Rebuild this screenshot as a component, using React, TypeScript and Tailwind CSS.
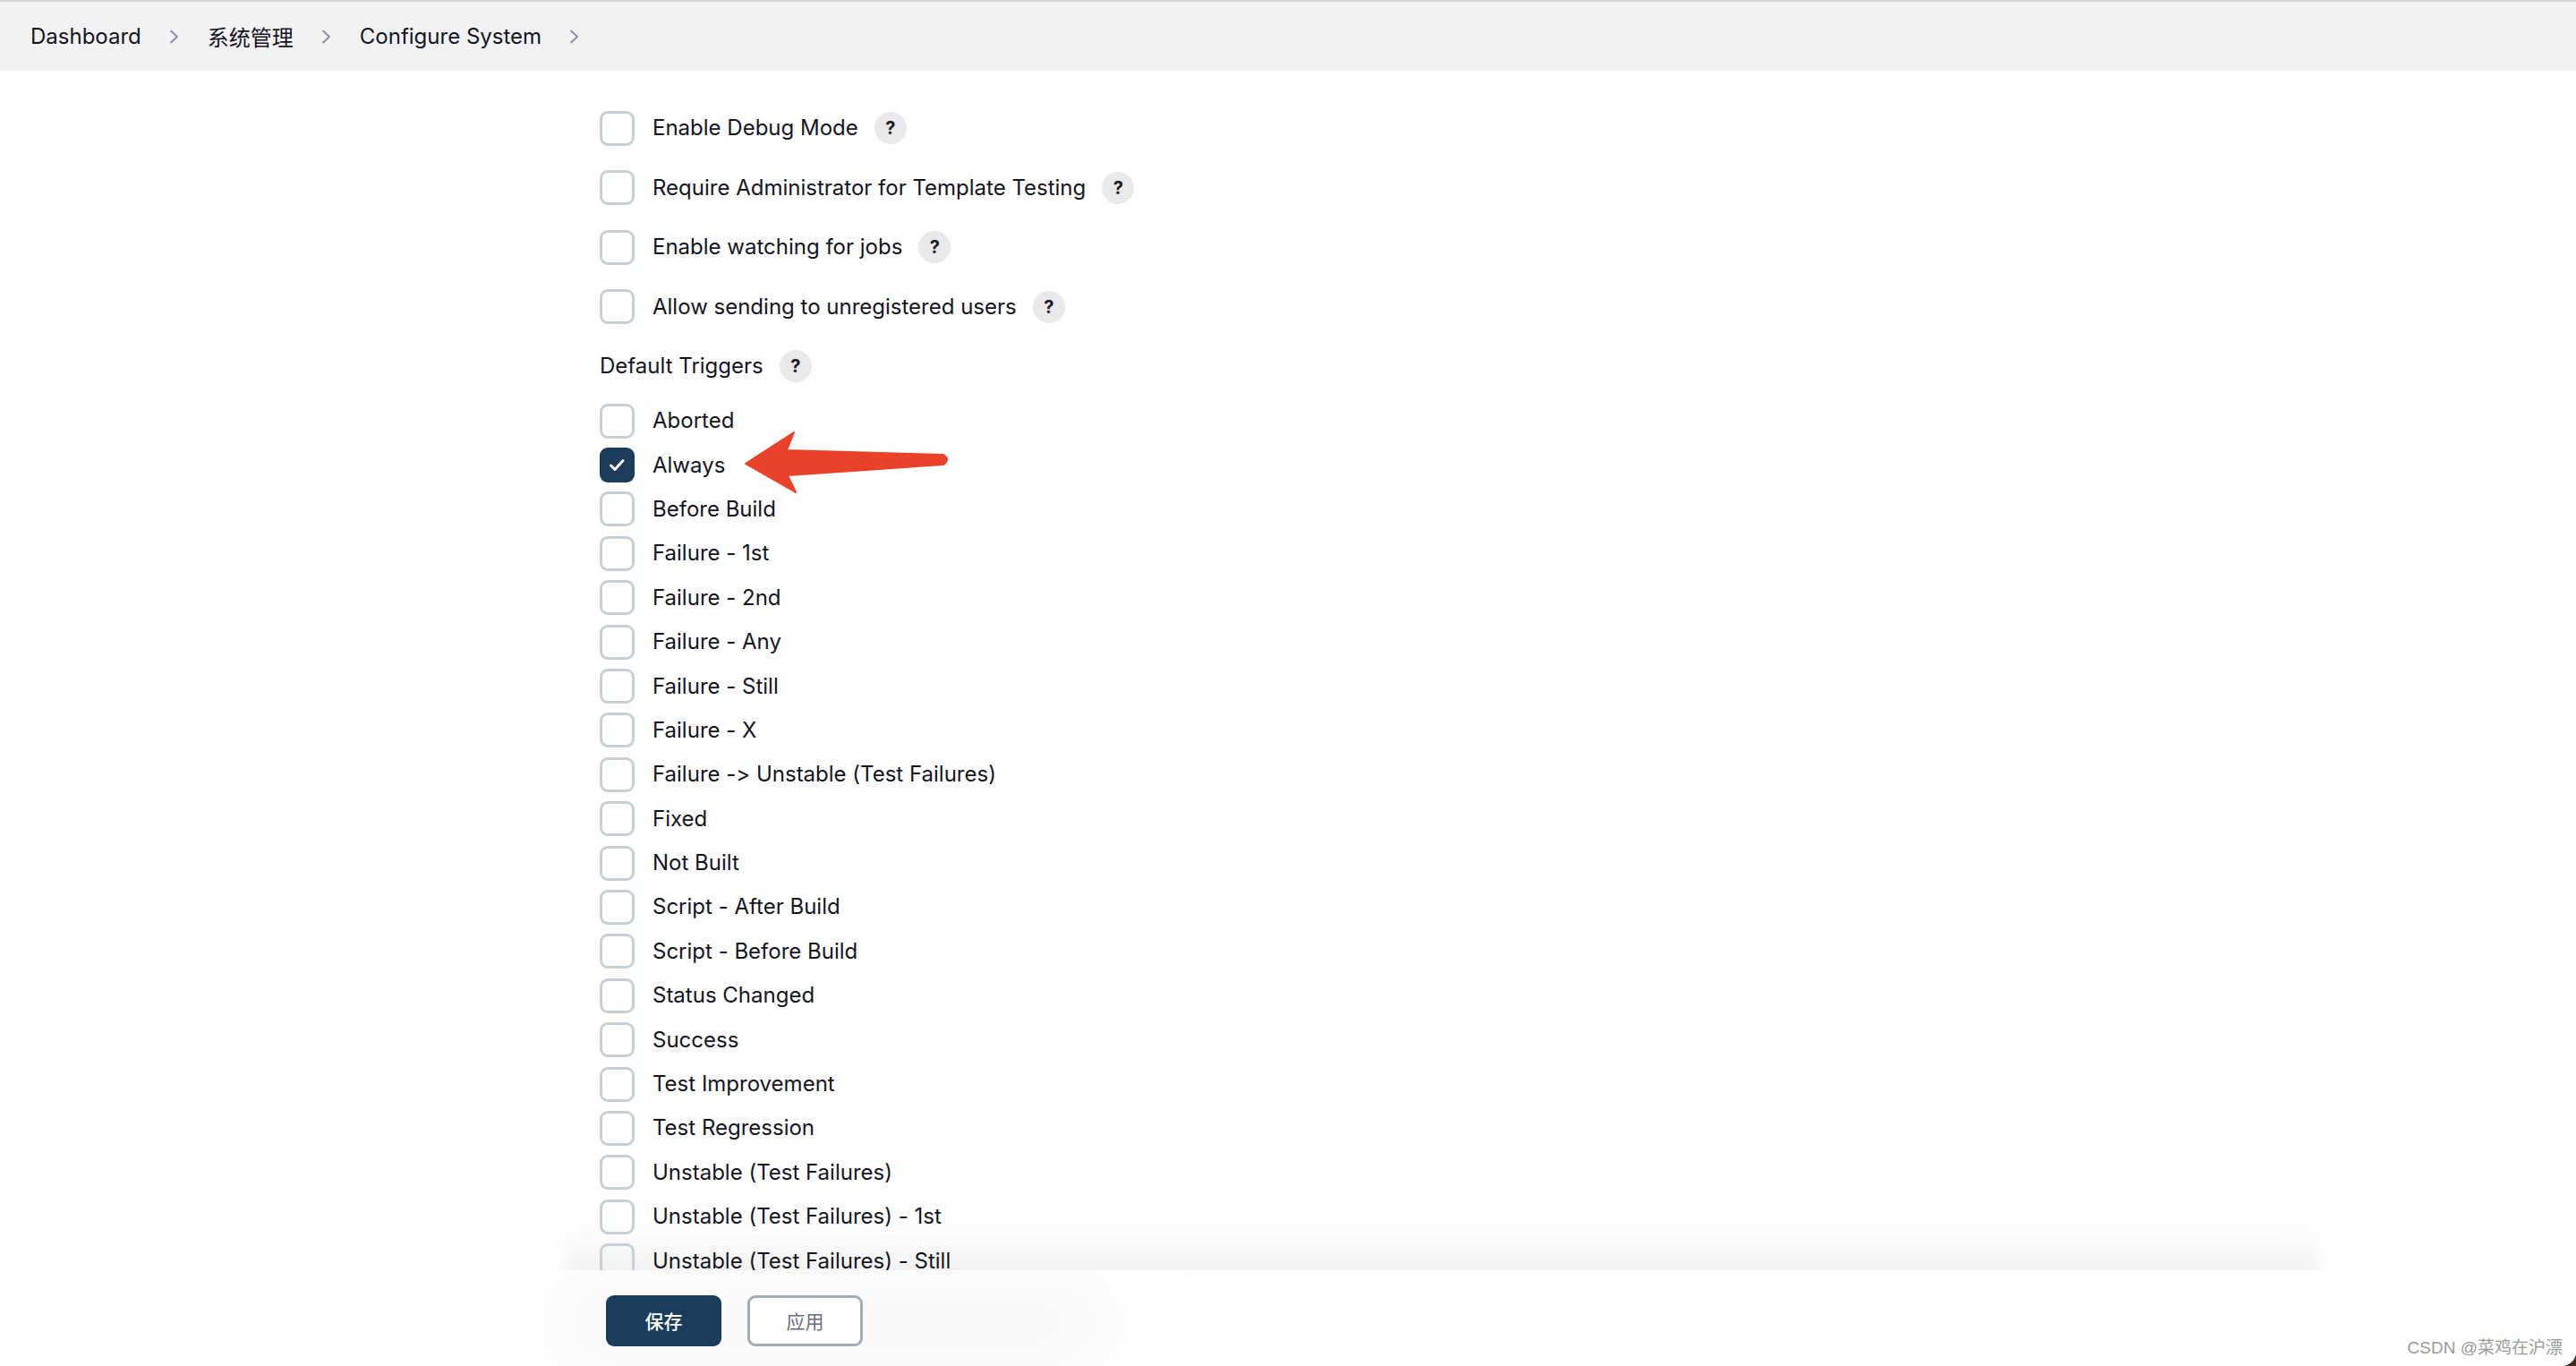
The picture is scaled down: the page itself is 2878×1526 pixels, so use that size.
import React from "react";

const triggers = [
  "Aborted",
  "Always",
  "Before Build",
  "Failure - 1st",
  "Failure - 2nd",
  "Failure - Any",
  "Failure - Still",
  "Failure - X",
  "Failure -> Unstable (Test Failures)",
  "Fixed",
  "Not Built",
  "Script - After Build",
  "Script - Before Build",
  "Status Changed",
  "Success",
  "Test Improvement",
  "Test Regression",
  "Unstable (Test Failures)",
  "Unstable (Test Failures) - 1st",
  "Unstable (Test Failures) - Still",
];

function Chevron() {
  return (
    <svg width="12" height="16" viewBox="0 0 12 16" className="shrink-0">
      <path d="M2 1.5 L9 8 L2 14.5" fill="none" stroke="#8c8c90" strokeWidth="1.8" strokeLinecap="round" strokeLinejoin="round" />
    </svg>
  );
}

function Help() {
  return (
    <span className="ml-[18px] flex h-[36px] w-[36px] shrink-0 items-center justify-center rounded-full bg-[#e9e9ec] text-[20px] font-bold text-[#1c1c24]">
      ?
    </span>
  );
}

function Box({ checked }: { checked?: boolean }) {
  if (checked) {
    return (
      <span className="flex h-[39px] w-[39px] shrink-0 items-center justify-center rounded-[9px] bg-[#1b3d5c]">
        <svg width="39" height="39" viewBox="0 0 39 39">
          <path d="M12.5 20 L17 24.5 L26 14.5" fill="none" stroke="#ffffff" strokeWidth="3" strokeLinecap="round" strokeLinejoin="round" />
        </svg>
      </span>
    );
  }
  return <span className="h-[39px] w-[39px] shrink-0 rounded-[9px] border-[3px] border-[#c8d0d5]" />;
}

export default function App() {
  return (
    <div className="relative flex h-[1526px] w-[2878px] flex-col overflow-hidden bg-[#4a2418] font-['Inter','Noto_Sans_CJK_SC',sans-serif] text-[#14141f] [font-feature-settings:'calt'_0,'liga'_0]">
      <div className="relative flex h-full w-full flex-col overflow-hidden rounded-br-[16px] bg-white">
        {/* Header / breadcrumb */}
        <header className="flex h-[79px] shrink-0 items-center gap-[31px] border-t-2 border-[#d6d6d9] bg-[#f2f2f5] pl-[34px] text-[24px]">
          <span>Dashboard</span>
          <Chevron />
          <span className="font-['Noto_Sans_CJK_SC',sans-serif] text-[24px]">系统管理</span>
          <Chevron />
          <span>Configure System</span>
          <Chevron />
        </header>

        {/* Content */}
        <main className="relative flex-1 overflow-hidden">
          <div className="absolute bottom-[-24px] left-[630px] h-[80px] w-[1960px] rounded-[30px] bg-gradient-to-b from-white to-[#ececec] blur-[10px]" />
          <div className="relative ml-[670px] flex flex-col pt-[31px] text-[24px]">
            {[
              "Enable Debug Mode",
              "Require Administrator for Template Testing",
              "Enable watching for jobs",
              "Allow sending to unregistered users",
            ].map((t) => (
              <div key={t} className="flex h-[66.5px] items-center">
                <Box />
                <span className="ml-[20px]">{t}</span>
                <Help />
              </div>
            ))}
            <div className="flex h-[66.5px] items-center">
              <span>Default Triggers</span>
              <Help />
            </div>
            <div className="mt-[3px] flex flex-col">
              {triggers.map((t) => (
                <div key={t} className="flex h-[49.4px] items-center">
                  <Box checked={t === "Always"} />
                  <span className="ml-[20px]">{t}</span>
                </div>
              ))}
            </div>
          </div>

          {/* red annotation arrow */}
          <svg className="absolute left-0 top-0" width="1100" height="600" viewBox="0 0 1100 600" style={{ pointerEvents: "none" }}>
            <path
              d="M833 439 L887 404 L879 424 L1054 429 Q1062 434 1054 440 L880 452 L889 471 Z"
              fill="#ea4229"
              stroke="#ea4229"
              strokeWidth="2"
              strokeLinejoin="round"
            />
          </svg>
        </main>

        {/* Bottom bar */}
        <footer className="relative flex h-[107px] shrink-0 items-start overflow-hidden bg-white">
          <div className="absolute left-[620px] top-[15px] h-[90px] w-[620px] rounded-full bg-[#f6f6f6] blur-2xl" />
          <div className="relative ml-[677px] mt-[28px] flex gap-[29px]">
            <button className="flex h-[57px] w-[129px] items-center justify-center rounded-[9px] bg-[#1b3d5c] font-['Noto_Sans_CJK_SC',sans-serif] text-[21px] font-medium text-white">
              保存
            </button>
            <button className="flex h-[57px] w-[129px] items-center justify-center rounded-[9px] border-[3px] border-[#a3abb3] bg-white font-['Noto_Sans_CJK_SC',sans-serif] text-[21px] text-[#6b6b86]">
              应用
            </button>
          </div>
          <span className="absolute bottom-[6px] right-[15px] font-['Liberation_Sans','Noto_Sans_CJK_SC',sans-serif] text-[19px] text-[#9a9a9a] [text-shadow:0_0_2px_#ffffff]">
            CSDN @菜鸡在沪漂
          </span>
        </footer>
      </div>
    </div>
  );
}
